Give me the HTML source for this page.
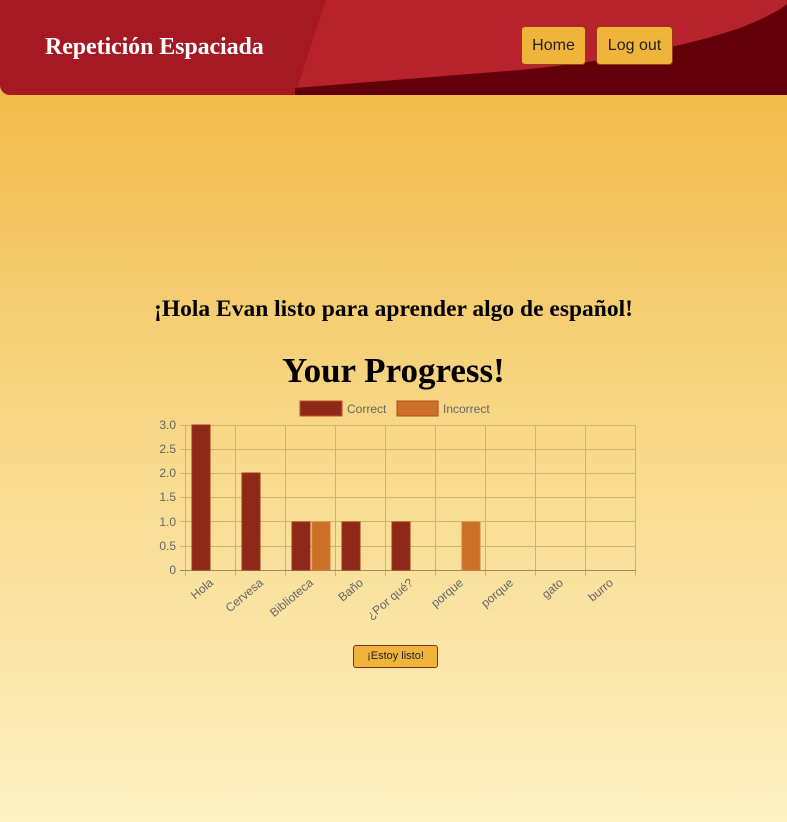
<!DOCTYPE html>
<html><head><meta charset="utf-8"><style>
html,body{margin:0;padding:0;width:787px;height:822px;overflow:hidden}
body{background:linear-gradient(to bottom,#f2bb4b 95px,#f7d786 420px,#fdf1c2 822px);font-family:"Liberation Sans",sans-serif;position:relative}
.hdr{position:absolute;left:0;top:0;width:787px;height:95px;border-radius:0 0 0 10px;overflow:hidden;background:#a51922}
.title{position:absolute;left:45px;top:34px;color:#fff;font-family:"Liberation Serif",serif;font-weight:bold;font-size:24px;letter-spacing:-0.1px}
.btn{position:absolute;top:26px;height:39px;background:#f0b43a;border:1px solid #9a3a1a;border-radius:4px;font-size:16px;color:#222;line-height:37px;text-align:center;box-sizing:border-box}
h2{position:absolute;left:0;width:787px;top:296px;margin:0;text-align:center;font-family:"Liberation Serif",serif;font-weight:bold;font-size:23.5px;color:#000}
h1{position:absolute;left:0;width:787px;top:351px;margin:0;text-align:center;font-family:"Liberation Serif",serif;font-weight:bold;font-size:35px;color:#000}
.go{position:absolute;left:353px;top:645px;width:85px;height:23px;background:#f0b43a;border:1px solid #8a2a15;border-radius:3px;font-size:11px;line-height:21px;text-align:center;box-sizing:border-box;color:#222}
</style></head><body>
<div class="hdr">
<svg width="787" height="95" style="position:absolute;left:0;top:0">
<polygon points="326,0 787,0 787,95 295,95" fill="#b8222c"/>
<path d="M295,95 L295,88 L520,70 C620,60 690,45 740,28 C765,18 780,10 787,4 L787,95 Z" fill="#620009"/>
</svg>
<div class="title">Repetición Espaciada</div>
</div>
<div class="btn" style="left:521px;width:65px">Home</div>
<div class="btn" style="left:596px;width:77px">Log out</div>
<h2>¡Hola Evan listo para aprender algo de español!</h2>
<h1>Your Progress!</h1>
<svg width="787" height="640" style="position:absolute;left:0;top:0" font-family="Liberation Sans, sans-serif">
<rect x="300" y="401" width="42" height="15" fill="#8e2818" stroke="#c0502a" stroke-width="1"/>
<text x="347" y="413" font-size="12" fill="#666">Correct</text>
<rect x="397" y="401" width="41" height="15" fill="#cc6f27" stroke="#b54c18" stroke-width="1"/>
<text x="443" y="413" font-size="12" fill="#666">Incorrect</text>
<g stroke="#d7b062" stroke-width="1">
<line x1="180" y1="425.5" x2="636" y2="425.5"/><line x1="180" y1="449.5" x2="636" y2="449.5"/>
<line x1="180" y1="473.5" x2="636" y2="473.5"/><line x1="180" y1="497.5" x2="636" y2="497.5"/>
<line x1="180" y1="521.5" x2="636" y2="521.5"/><line x1="180" y1="546.5" x2="636" y2="546.5"/>
<line x1="185.5" y1="425" x2="185.5" y2="576"/><line x1="235.5" y1="425" x2="235.5" y2="576"/>
<line x1="285.5" y1="425" x2="285.5" y2="576"/><line x1="335.5" y1="425" x2="335.5" y2="576"/>
<line x1="385.5" y1="425" x2="385.5" y2="576"/><line x1="435.5" y1="425" x2="435.5" y2="576"/>
<line x1="485.5" y1="425" x2="485.5" y2="576"/><line x1="535.5" y1="425" x2="535.5" y2="576"/>
<line x1="585.5" y1="425" x2="585.5" y2="576"/><line x1="635.5" y1="425" x2="635.5" y2="576"/>
</g>
<line x1="180" y1="570.5" x2="636" y2="570.5" stroke="#a08860"/>
<g font-size="12" fill="#666" text-anchor="end">
<text x="176" y="429">3.0</text><text x="176" y="453">2.5</text><text x="176" y="477">2.0</text>
<text x="176" y="501">1.5</text><text x="176" y="526">1.0</text><text x="176" y="550">0.5</text><text x="176" y="574">0</text>
</g>
<g fill="#8e2818" stroke="#a0341c">
<rect x="192" y="425" width="18" height="145"/><rect x="242" y="473" width="18" height="97"/>
<rect x="292" y="522" width="18" height="48"/><rect x="342" y="522" width="18" height="48"/>
<rect x="392" y="522" width="18" height="48"/>
</g>
<g fill="#cc6f27" stroke="#d0803a">
<rect x="312" y="522" width="18" height="48"/><rect x="462" y="522" width="18" height="48"/>
</g>
<g font-size="12" fill="#666" text-anchor="end">
<text transform="translate(214,584) rotate(-40)">Hola</text>
<text transform="translate(264,584) rotate(-40)">Cervesa</text>
<text transform="translate(314,584) rotate(-40)">Biblioteca</text>
<text transform="translate(364,584) rotate(-40)">Baño</text>
<text transform="translate(414,584) rotate(-40)">¿Por qué?</text>
<text transform="translate(464,584) rotate(-40)">porque</text>
<text transform="translate(514,584) rotate(-40)">porque</text>
<text transform="translate(564,584) rotate(-40)">gato</text>
<text transform="translate(614,584) rotate(-40)">burro</text>
</g>
</svg>
<div class="go">¡Estoy listo!</div>
</body></html>
